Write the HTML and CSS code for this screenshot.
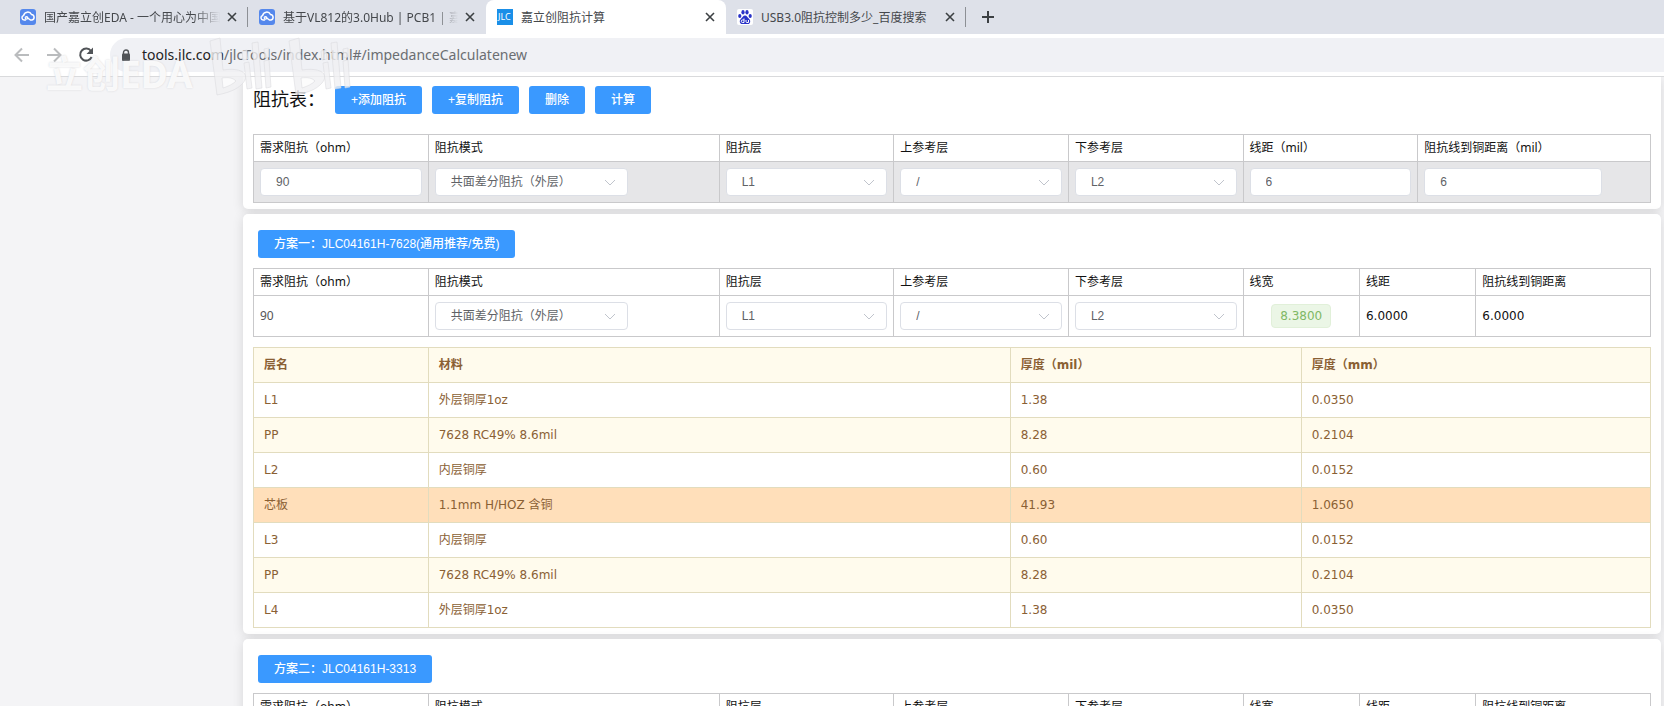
FILE: index.html
```html
<!DOCTYPE html>
<html lang="zh-CN">
<head>
    <meta charset="UTF-8">
    <title>嘉立创阻抗计算</title>
    <link rel="stylesheet" href="styles.css">
</head>
<body>
    <svg class="defs" aria-hidden="true">
        <symbol id="eda" viewBox="0 0 16 16">
            <rect width="16" height="16" rx="3" fill="#5588ec"/>
            <path d="M5.500 11H4.200A2.300 2.300 0 0 1 3.600 6.500 4.200 4.200 0 0 1 11.500 5.500 2.800 2.800 0 0 1 12 11H10.500L7 8.500" fill="none" stroke="#fff" stroke-width="1.500" stroke-linecap="round"/>
            <circle cx="6.500" cy="8.800" r="1.300" fill="none" stroke="#fff" stroke-width="1.200"/>
        </symbol>
        <symbol id="close" viewBox="0 0 10 10">
            <path d="M1 1l8 8M9 1L1 9" stroke="#3c4043" stroke-width="1.600"/>
        </symbol>
    </svg>

    <div class="tabs">
        <div class="tab">
            <svg class="favicon"><use href="#eda"/></svg>
            <span class="tab-title fade">国产嘉立创EDA - 一个用心为中国</span>
            <button class="tab-close" aria-label="关闭"><svg><use href="#close"/></svg></button>
        </div>
        <div class="tab divided">
            <svg class="favicon"><use href="#eda"/></svg>
            <span class="tab-title fade">基于VL812的3.0Hub | PCB1 | 嘉</span>
            <button class="tab-close" aria-label="关闭"><svg><use href="#close"/></svg></button>
        </div>
        <div class="tab active">
            <span class="favicon jlc">JLC</span>
            <span class="tab-title">嘉立创阻抗计算</span>
            <button class="tab-close" aria-label="关闭"><svg><use href="#close"/></svg></button>
        </div>
        <div class="tab last">
            <svg class="favicon" viewBox="0 0 16 16">
                <rect width="16" height="16" rx="2" fill="#fff"/>
                <g fill="#2932c8">
                    <ellipse cx="2.800" cy="7" rx="1.600" ry="2.100"/>
                    <ellipse cx="6" cy="3.300" rx="1.600" ry="2.200"/>
                    <ellipse cx="10" cy="3.300" rx="1.600" ry="2.200"/>
                    <ellipse cx="13.200" cy="7" rx="1.600" ry="2.100"/>
                    <path d="M8 6.500c2 0 2.500 2 4 3.200 2 1.700 1.500 5.300-1.200 5.300H5.200C2.500 15 2 11.400 4 9.700 5.500 8.500 6 6.500 8 6.500z"/>
                </g>
                <path d="M7 9.500v4H5.500a1.200 1.200 0 0 1 0-2.500H7M9 11v1.500q0 1 1 1h1.500V11" fill="none" stroke="#fff"/>
            </svg>
            <span class="tab-title">USB3.0阻抗控制多少_百度搜索</span>
            <button class="tab-close" aria-label="关闭"><svg><use href="#close"/></svg></button>
        </div>
        <button class="new-tab" aria-label="新标签页">
            <svg viewBox="0 0 12 12"><path d="M6 0v12M0 6h12" stroke="#3c4043" stroke-width="2"/></svg>
        </button>
    </div>

    <div class="toolbar">
        <button class="nav" aria-label="后退"><svg viewBox="0 0 16 16"><path d="M15 8H2M8 1.500L1.500 8 8 14.500" stroke="#babcbe"/></svg></button>
        <button class="nav" aria-label="前进"><svg viewBox="0 0 16 16"><path d="M1 8h13M8 1.500L14.500 8 8 14.500" stroke="#babcbe"/></svg></button>
        <button class="nav" aria-label="刷新"><svg viewBox="0 0 16 16"><path d="M13 4A6 6 0 1 0 13.700 10" stroke="#505357"/><path d="M15 .5v6.500H8.500z" fill="#505357"/></svg></button>
        <div class="address">
            <svg class="lock" viewBox="0 0 10 12"><path d="M2.500 5V3.500a2.500 2.500 0 0 1 5 0V5" fill="none" stroke="#505357" stroke-width="1.400"/><rect x="1" y="4.500" width="8" height="7.500" rx="1" fill="#505357"/></svg>
            <span><b>tools.jlc.com</b>/jlcTools/index.html#/impedanceCalculatenew</span>
        </div>
    </div>

    <div class="watermark" aria-hidden="true">
        <span>立创EDA</span>
        <svg viewBox="0 0 144 64">
            <g id="bili">
                <path d="M1 5l10-3 3 32c18-3 28 4 20 13-6 7-16 10-26 12z"/>
                <path d="M13 42l1 10c6-2 10-4 13-7-3-3-7-4-14-3z" class="hole"/>
                <path d="M35 27l5-1 3 26-5 1zM43 7l6-1 4 46-6 1zM55 25l5-1 2 27-5 1zM33 15l5-1 1 9-5 1zM55 13l5-1v9l-4 1z"/>
            </g>
            <use href="#bili" x="79"/>
        </svg>
    </div>

    <div class="page">
        <main class="content">
            <section class="card first">
                <div class="actions">
                    <h1>阻抗表：</h1>
                    <button class="btn">+添加阻抗</button>
                    <button class="btn">+复制阻抗</button>
                    <button class="btn">删除</button>
                    <button class="btn">计算</button>
                </div>
                <table class="grid">
                    <colgroup><col class="w3"><col class="w5"><col class="w3"><col class="w3"><col class="w3"><col class="w3"><col class="w4"></colgroup>
                    <thead>
                        <tr><th>需求阻抗（ohm）</th><th>阻抗模式</th><th>阻抗层</th><th>上参考层</th><th>下参考层</th><th>线距（mil）</th><th>阻抗线到铜距离（mil）</th></tr>
                    </thead>
                    <tbody>
                        <tr class="selected">
                            <td><input class="field" type="text" value="90" aria-label="需求阻抗（ohm）"></td>
                            <td><select class="field mode" aria-label="阻抗模式"><option>共面差分阻抗（外层）</option></select></td>
                            <td><select class="field" aria-label="阻抗层"><option>L1</option></select></td>
                            <td><select class="field" aria-label="上参考层"><option>/</option></select></td>
                            <td><select class="field" aria-label="下参考层"><option>L2</option></select></td>
                            <td><input class="field" type="text" value="6" aria-label="线距（mil）"></td>
                            <td><input class="field copper" type="text" value="6" aria-label="阻抗线到铜距离（mil）"></td>
                        </tr>
                    </tbody>
                </table>
            </section>

            <section class="card">
                <button class="btn plan">方案一：JLC04161H-7628(通用推荐/免费)</button>
                <table class="grid">
                    <colgroup><col class="w3"><col class="w5"><col class="w3"><col class="w3"><col class="w3"><col class="w2"><col class="w2"><col class="w3"></colgroup>
                    <thead>
                        <tr><th>需求阻抗（ohm）</th><th>阻抗模式</th><th>阻抗层</th><th>上参考层</th><th>下参考层</th><th>线宽</th><th>线距</th><th>阻抗线到铜距离</th></tr>
                    </thead>
                    <tbody>
                        <tr>
                            <td class="ohm">90</td>
                            <td><select class="field mode" aria-label="阻抗模式"><option>共面差分阻抗（外层）</option></select></td>
                            <td><select class="field" aria-label="阻抗层"><option>L1</option></select></td>
                            <td><select class="field" aria-label="上参考层"><option>/</option></select></td>
                            <td><select class="field" aria-label="下参考层"><option>L2</option></select></td>
                            <td class="center"><span class="tag">8.3800</span></td>
                            <td>6.0000</td>
                            <td>6.0000</td>
                        </tr>
                    </tbody>
                </table>
                <table class="stack">
                    <colgroup><col class="w3"><col class="w10"><col class="w5"><col class="w6"></colgroup>
                    <thead>
                        <tr><th>层名</th><th>材料</th><th>厚度（mil）</th><th>厚度（mm）</th></tr>
                    </thead>
                    <tbody>
                        <tr><td>L1</td><td>外层铜厚1oz</td><td>1.38</td><td>0.0350</td></tr>
                        <tr class="pp"><td>PP</td><td>7628 RC49% 8.6mil</td><td>8.28</td><td>0.2104</td></tr>
                        <tr><td>L2</td><td>内层铜厚</td><td>0.60</td><td>0.0152</td></tr>
                        <tr class="core"><td>芯板</td><td>1.1mm H/HOZ 含铜</td><td>41.93</td><td>1.0650</td></tr>
                        <tr><td>L3</td><td>内层铜厚</td><td>0.60</td><td>0.0152</td></tr>
                        <tr class="pp"><td>PP</td><td>7628 RC49% 8.6mil</td><td>8.28</td><td>0.2104</td></tr>
                        <tr><td>L4</td><td>外层铜厚1oz</td><td>1.38</td><td>0.0350</td></tr>
                    </tbody>
                </table>
            </section>

            <section class="card">
                <button class="btn plan">方案二：JLC04161H-3313</button>
                <table class="grid">
                    <colgroup><col class="w3"><col class="w5"><col class="w3"><col class="w3"><col class="w3"><col class="w2"><col class="w2"><col class="w3"></colgroup>
                    <thead>
                        <tr><th>需求阻抗（ohm）</th><th>阻抗模式</th><th>阻抗层</th><th>上参考层</th><th>下参考层</th><th>线宽</th><th>线距</th><th>阻抗线到铜距离</th></tr>
                    </thead>
                </table>
            </section>
        </main>
    </div>
</body>
</html>
```
FILE: styles.css
```css
* {
    box-sizing: border-box;
}
body {
    margin: 0;
    height: 100vh;
    overflow: hidden;
    display: flex;
    flex-direction: column;
    background: #f4f4f6;
    color: #111;
    font: 12px/18px "DejaVu Sans", "Noto Sans CJK SC", sans-serif;
}
button {
    border: 0;
    padding: 0;
    background: none;
}
.defs {
    position: absolute;
    width: 0;
    height: 0;
}

/* tab strip */
.tabs {
    flex: none;
    display: flex;
    height: 34px;
    background: #dee1e9;
    font-family: "Noto Sans", "Noto Sans CJK SC", sans-serif;
    color: #45484c;
}
.tab {
    display: flex;
    align-items: center;
    width: 240px;
    padding: 0 8px 0 11px;
}
.tab:first-child {
    width: 248px;
    padding-left: 20px;
}
.tab:first-child,
.tab.last {
    background: linear-gradient(#8d9095, #8d9095) no-repeat right center / 1px 20px;
}
.tab.divided {
    width: 238px;
}
.tab.active {
    background: #fff;
    border-radius: 8px 8px 0 0;
}
.favicon {
    flex: none;
    width: 16px;
    height: 16px;
    margin-right: 8px;
}
.jlc {
    overflow: hidden;
    background: #1a8fe8;
    color: #fff;
    font-size: 9px;
    line-height: 16px;
    padding-left: 1px;
}
.tab-title {
    flex: 1;
    overflow: hidden;
    white-space: nowrap;
    line-height: 20px;
    padding-top: 2px;
}
.fade {
    -webkit-mask-image: linear-gradient(to right, #000 85%, transparent);
    mask-image: linear-gradient(to right, #000 85%, transparent);
}
.tab-close {
    width: 16px;
    height: 16px;
    margin-left: 4px;
    display: flex;
    align-items: center;
    justify-content: center;
}
.tab-close svg {
    width: 10px;
    height: 10px;
}
.new-tab {
    width: 44px;
    display: flex;
    align-items: center;
    justify-content: center;
}
.new-tab svg {
    width: 12px;
    height: 12px;
}

/* toolbar */
.toolbar {
    flex: none;
    display: flex;
    align-items: center;
    gap: 16px;
    height: 43px;
    padding-left: 14px;
    background: #fff;
    border-bottom: 1px solid #d9dadc;
}
.nav {
    width: 16px;
    height: 16px;
}
.nav svg {
    display: block;
    fill: none;
    stroke-width: 2;
}
.address {
    flex: 1;
    display: flex;
    align-items: center;
    height: 34px;
    padding-left: 11px;
    border-radius: 17px 0 0 17px;
    background: #f0f1f5;
    color: #6b6e72;
    font: 14px/20px "Noto Sans", sans-serif;
}
.address b {
    color: #222;
    font-weight: normal;
}
.lock {
    width: 10px;
    height: 12px;
    margin-right: 11px;
}

/* overlay mark */
.watermark {
    position: absolute;
    z-index: 2;
    left: 46px;
    top: 36px;
    display: flex;
    gap: 16px;
    color: rgba(255, 255, 255, 0.85);
    font: bold 37px/76px "Noto Sans", "Noto Sans CJK SC", sans-serif;
    text-shadow: 0 0 2px #d4d4d8;
    pointer-events: none;
}
.watermark svg {
    width: 144px;
    height: 64px;
    fill: rgba(240, 240, 243, 0.8);
    stroke: rgba(215, 215, 220, 0.5);
    stroke-width: 1;
}
.watermark .hole {
    fill: rgba(255, 255, 255, 0.7);
}

/* page */
.page {
    flex: 1;
    min-height: 0;
    overflow: hidden;
    padding: 0 3px 0 243px;
}
.content {
    display: flex;
    flex-direction: column;
    gap: 5px;
}
.card {
    padding: 16px 10px 6px;
    border-radius: 5px;
    background: #fff;
    box-shadow: 0 2px 12px rgba(0, 0, 0, 0.12);
}
.card.first {
    padding-top: 9px;
    border-radius: 0 0 5px 5px;
}
.actions {
    display: flex;
    align-items: center;
    gap: 10px;
    margin-bottom: 20px;
}
.actions h1 {
    width: 72px;
    margin: 0;
    font-size: 18px;
    font-weight: normal;
    line-height: 24px;
    white-space: nowrap;
}
.btn {
    height: 28px;
    padding: 0 16px;
    border-radius: 3px;
    background: #3a99ff;
    color: #fff;
    font: 500 12px/18px "Liberation Sans", "Noto Sans CJK SC", sans-serif;
}
.plan {
    display: block;
    margin: 0 0 10px 5px;
}

table {
    width: 100%;
    table-layout: fixed;
    border-collapse: collapse;
}
.w2 { width: 8.333%; }
.w3 { width: 12.5%; }
.w4 { width: 16.667%; }
.w5 { width: 20.833%; }
.w6 { width: 25%; }
.w10 { width: 41.667%; }

.grid th,
.grid td {
    padding: 0 6px;
    border: 1px solid #c9c9cb;
    text-align: left;
}
.grid th {
    height: 27px;
    font-weight: normal;
    font-family: "Noto Sans", "Noto Sans CJK SC", sans-serif;
}
.grid td {
    height: 41px;
}
.grid .ohm {
    color: #555;
    font-family: "Noto Sans", sans-serif;
}
.grid .center {
    text-align: center;
}
.selected {
    background: #e6e6e8;
}
.field {
    display: block;
    width: 100%;
    height: 28px;
    padding: 0 15px;
    border: 1px solid #dcdfe6;
    border-radius: 4px;
    background: #fff;
    color: #606266;
    font: 12px/18px "Liberation Sans", "Noto Sans CJK SC", sans-serif;
}
select.field {
    appearance: none;
    background: #fff url("data:image/svg+xml,%3Csvg xmlns='http://www.w3.org/2000/svg' width='12' height='7'%3E%3Cpath d='M1 1l5 5 5-5' fill='none' stroke='%23c0c4cc'/%3E%3C/svg%3E") no-repeat right 11px center;
}
.field.mode {
    width: 193px;
}
.field.copper {
    width: 178px;
}
.tag {
    display: inline-block;
    height: 24px;
    padding: 0 8px;
    border: 1px solid #e1f0d9;
    border-radius: 4px;
    background: #ebf6e6;
    color: #7fb865;
    line-height: 22px;
}

/* layer stack */
.stack {
    margin-top: 10px;
    color: #8a6034;
}
.stack th,
.stack td {
    height: 35px;
    padding: 0 10px;
    border: 1px solid #e2dcbe;
    text-align: left;
}
.stack th,
.pp {
    background: #fffbed;
}
.core {
    background: #ffdfba;
}
```
